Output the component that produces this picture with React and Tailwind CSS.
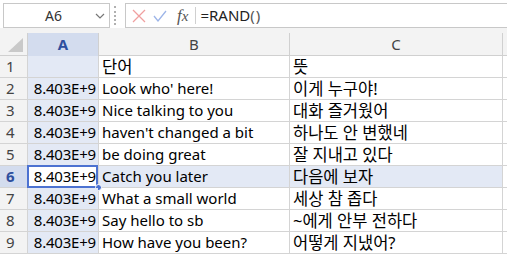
import React from 'react'

const rows = [
  ['', '단어', '뜻'],
  ['8.403E+9', "Look who' here!", '이게 누구야!'],
  ['8.403E+9', 'Nice talking to you', '대화 즐거웠어'],
  ['8.403E+9', "haven't changed a bit", '하나도 안 변했네'],
  ['8.403E+9', 'be doing great', '잘 지내고 있다'],
  ['8.403E+9', 'Catch you later', '다음에 보자'],
  ['8.403E+9', 'What a small world', '세상 참 좁다'],
  ['8.403E+9', 'Say hello to sb', '~에게 안부 전하다'],
  ['8.403E+9', 'How have you been?', '어떻게 지냈어?'],
]

const font = { fontFamily: '"Noto Sans", "Noto Sans CJK KR", sans-serif' }

const isKo = s => /[\uac00-\ud7a3]/.test(s)

export default function App() {
  return (
    <div className="w-[507px] h-[255px] overflow-hidden bg-white text-black" style={font}>
      {/* formula bar */}
      <div className="flex h-[28px] items-end bg-white">
        <div className="ml-[3px] flex h-[25px] w-[107px] items-center border border-[#c8c8c8] bg-white">
          <span className="flex-1 text-center text-[14px] text-[#333] pl-[8px]">A6</span>
          <svg width="10" height="6" viewBox="0 0 10 6" className="mr-[4px]">
            <path d="M1 1l4 4 4-4" fill="none" stroke="#777" strokeWidth="1.2" />
          </svg>
        </div>
        <div className="mx-[4px] mb-[3px] h-[19px] w-[2px] border-l-2 border-dotted border-[#b0b0b0]" />
        <div className="ml-[5px] flex h-[25px] flex-1 items-center border border-r-0 border-[#c8c8c8] bg-white">
          <svg width="14" height="14" viewBox="0 0 14 14" className="ml-[6px]">
            <path d="M1 1l12 12M13 1L1 13" stroke="#f0a0a0" strokeWidth="1.3" />
          </svg>
          <svg width="14" height="12" viewBox="0 0 14 12" className="ml-[7px]">
            <path d="M1 6l4 5L13 1" fill="none" stroke="#9db5e8" strokeWidth="1.3" />
          </svg>
          <span className="ml-[10px] text-[17px] italic text-[#555]" style={{ fontFamily: '"Liberation Serif", serif' }}>
            f<span className="text-[15px]">x</span>
          </span>
          <div className="ml-[7px] h-[17px] w-px bg-[#d0d0d0]" />
          <span className="ml-[4px] text-[15px] text-[#222]">
            =RAND<span className="text-[#555] tracking-[1px]">()</span>
          </span>
        </div>
      </div>

      {/* column headers */}
      <div className="h-[28px] bg-[#f3f3f3] pt-[5px]">
        <div className="grid h-[23px] grid-cols-[27px_71px_191px_214px_4px] border-b border-[#d0d0d0]">
          <div className="relative">
            <svg width="16" height="14" viewBox="0 0 16 14" className="absolute left-[8px] top-[5px]">
              <path d="M15 0V14H0Z" fill="#c9c9c9" />
            </svg>
          </div>
          <div className="flex items-center justify-center border-l border-[#d0d0d0] bg-[#d3dcee] text-[15px] font-bold text-[#2e4f9e]">
            A
          </div>
          <div className="flex items-center justify-center border-l border-[#d0d0d0] text-[15px] text-[#444]">B</div>
          <div className="flex items-center justify-center border-l border-r border-[#d0d0d0] text-[15px] text-[#444]">C</div>
          <div />
        </div>
      </div>

      {/* rows */}
      {rows.map((r, i) => {
        const n = i + 1
        const sel = n === 6
        return (
          <div key={n} className="grid h-[22px] grid-cols-[27px_71px_191px_214px_4px] border-b border-[#d4d4d4] text-[15px] leading-[21px]">
            <div
              className={`pl-[6px] ${sel ? 'bg-[#d3dcee] font-bold text-[#2e4f9e]' : 'bg-[#f3f3f3] text-[#444]'}`}
            >
              {n}
            </div>
            <div
              className={`relative border-l border-[#d4d4d4] pr-[2px] text-right tracking-[-0.2px] ${
                sel ? 'bg-white' : 'bg-[#e3e9f5]'
              }`}
            >
              {r[0]}
              {sel && (
                <>
                  <div className="absolute -left-px -top-px -bottom-px right-0 border-2 border-[#4c72d1]" />
                  <div className="absolute -right-[4px] -bottom-[4px] h-[7px] w-[7px] rounded-full bg-[#4c72d1] border border-white" />
                </>
              )}
            </div>
            <div
              className={`whitespace-nowrap border-l border-[#d4d4d4] pl-[3px] ${sel ? 'bg-[#e3e9f5]' : ''} ${
                isKo(r[1]) ? 'text-[16.5px]' : ''
              }`}
            >
              {r[1]}
            </div>
            <div
              className={`whitespace-nowrap border-l border-r border-[#d4d4d4] pl-[3px] text-[16.5px] ${
                sel ? 'bg-[#e3e9f5]' : ''
              }`}
            >
              {r[2]}
            </div>
            <div />
          </div>
        )
      })}
    </div>
  )
}
